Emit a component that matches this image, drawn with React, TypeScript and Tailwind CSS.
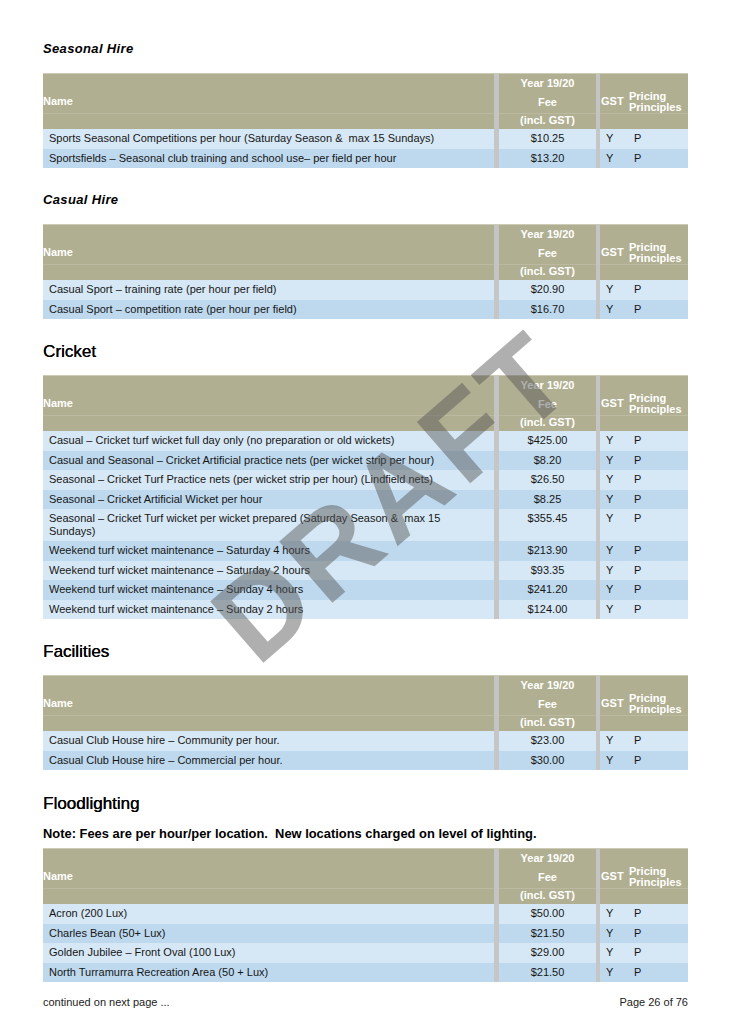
type Row = [string, string];

const seasonal: Row[] = [
  ['Sports Seasonal Competitions per hour (Saturday Season &\u00a0 max 15 Sundays)', '$10.25'],
  ['Sportsfields – Seasonal club training and school use– per field per hour', '$13.20'],
];

const casual: Row[] = [
  ['Casual Sport – training rate (per hour per field)', '$20.90'],
  ['Casual Sport – competition rate (per hour per field)', '$16.70'],
];

const cricket: Row[] = [
  ['Casual – Cricket turf wicket full day only (no preparation or old wickets)', '$425.00'],
  ['Casual and Seasonal – Cricket Artificial practice nets (per wicket strip per hour)', '$8.20'],
  ['Seasonal – Cricket Turf Practice nets (per wicket strip per hour) (Lindfield nets)', '$26.50'],
  ['Seasonal – Cricket Artificial Wicket per hour', '$8.25'],
  ['Seasonal – Cricket Turf wicket per wicket prepared (Saturday Season &\u00a0 max 15\nSundays)', '$355.45'],
  ['Weekend turf wicket maintenance – Saturday 4 hours', '$213.90'],
  ['Weekend turf wicket maintenance – Saturday 2 hours', '$93.35'],
  ['Weekend turf wicket maintenance – Sunday 4 hours', '$241.20'],
  ['Weekend turf wicket maintenance – Sunday 2 hours', '$124.00'],
];

const facilities: Row[] = [
  ['Casual Club House hire – Community per hour.', '$23.00'],
  ['Casual Club House hire – Commercial per hour.', '$30.00'],
];

const flood: Row[] = [
  ['Acron (200 Lux)', '$50.00'],
  ['Charles Bean (50+ Lux)', '$21.50'],
  ['Golden Jubilee – Front Oval (100 Lux)', '$29.00'],
  ['North Turramurra Recreation Area (50 + Lux)', '$21.50'],
];

const FeeTable = ({ rows }: { rows: Row[] }) => (
  <div className="w-[645px] text-[11px]">
    {/* header */}
    <div className="relative flex h-[56px] border-t border-[#cdcbb6] bg-[#b1af91] font-bold text-white">
      <div className="absolute left-0 right-0 top-[39px] h-px bg-[#bbb9a0]" />
      <div className="relative flex w-[451px] items-center leading-none">Name</div>
      <div className="relative w-[5px] bg-[#c4c4c4]" />
      <div className="relative flex w-[97px] flex-col items-center leading-[18.5px]">
        <span>Year 19/20</span>
        <span>Fee</span>
        <span>(incl. GST)</span>
      </div>
      <div className="relative w-[4px] bg-[#c4c4c4]" />
      <div className="relative flex w-[28px] items-center pl-[1px] leading-none">GST</div>
      <div className="relative flex w-[60px] flex-col justify-center pl-[1px] leading-[11px]">
        <span>Pricing</span>
        <span>Principles</span>
      </div>
    </div>
    {/* rows */}
    {rows.map(([name, fee], i) => (
      <div
        key={i}
        className={`flex leading-[12.5px] text-[#161616] ${i % 2 === 0 ? 'bg-[#d6e8f5]' : 'bg-[#bed9ee]'}`}
      >
        <div className="w-[451px] whitespace-pre-line pb-[4px] pl-[6px] pt-[3px]">{name}</div>
        <div className="w-[5px] bg-[#c6c6c6]" />
        <div className="w-[97px] pt-[3px] text-center">{fee}</div>
        <div className="w-[4px] bg-[#c6c6c6]" />
        <div className="w-[28px] pl-[6px] pt-[3px]">Y</div>
        <div className="w-[60px] pl-[6px] pt-[3px]">P</div>
      </div>
    ))}
  </div>
);

const sectionTitle = 'h-[20px] text-[17px] leading-[20px] [text-shadow:0.35px_0_0_currentColor]';

export default function App() {
  return (
    <div className="relative h-[1033px] w-[730px] overflow-hidden bg-white font-['Liberation_Sans',Arial,sans-serif] text-black">
      <div className="flex flex-col pl-[43px] pt-[41px]">
        <h3 className="h-[16px] text-[13px] font-bold italic leading-[16px] tracking-[0.35px]">Seasonal Hire</h3>
        <div className="mt-[16px]">
          <FeeTable rows={seasonal} />
        </div>

        <h3 className="mt-[24px] h-[16px] text-[13px] font-bold italic leading-[16px] tracking-[0.35px]">Casual Hire</h3>
        <div className="mt-[16px]">
          <FeeTable rows={casual} />
        </div>

        <h2 className={`mt-[23px] ${sectionTitle}`}>Cricket</h2>
        <div className="mt-[13px]">
          <FeeTable rows={cricket} />
        </div>

        <h2 className={`mt-[23px] ${sectionTitle}`}>Facilities</h2>
        <div className="mt-[13px]">
          <FeeTable rows={facilities} />
        </div>

        <h2 className={`mt-[24px] ${sectionTitle}`}>Floodlighting</h2>
        <p className="mt-[12px] h-[15px] text-[12.9px] font-bold leading-[15px]">
          Note: Fees are per hour/per location.&nbsp; New locations charged on level of lighting.
        </p>
        <div className="mt-[7px]">
          <FeeTable rows={flood} />
        </div>

        <div className="mt-[13px] flex w-[645px] justify-between text-[11px] leading-[14px] text-[#222]">
          <span>continued on next page ...</span>
          <span>Page 26 of 76</span>
        </div>
      </div>

      {/* DRAFT watermark */}
      <div className="pointer-events-none absolute inset-0 flex items-center justify-center">
        <span className="translate-x-[28px] translate-y-[-21px] rotate-[-41deg] select-none text-[118px] font-bold leading-none tracking-[6px] text-[rgba(85,85,85,0.47)]">
          DRAFT
        </span>
      </div>
    </div>
  );
}
